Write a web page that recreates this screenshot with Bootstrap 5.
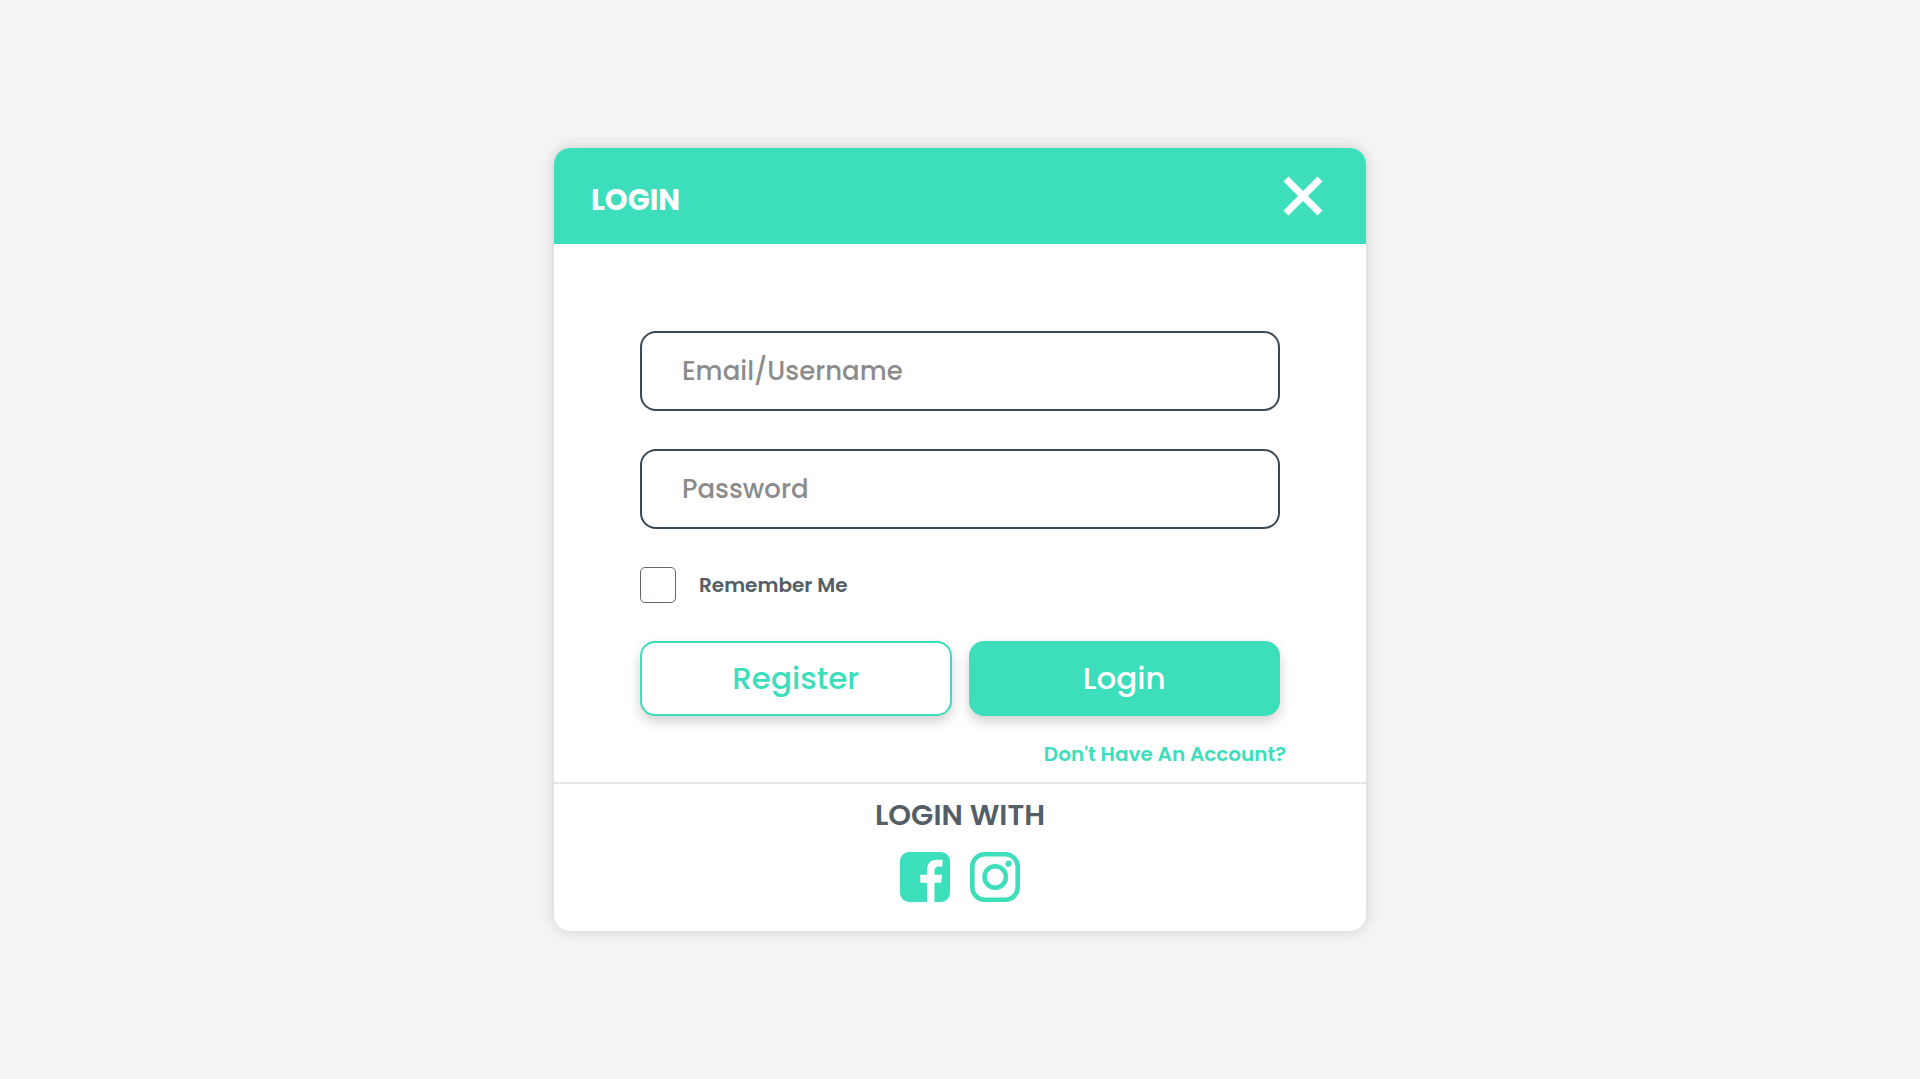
<!DOCTYPE html>
<html lang="en">
<head>
<meta charset="utf-8">
<meta name="viewport" content="width=device-width, initial-scale=1">
<title>Login</title>
<link href="https://cdn.jsdelivr.net/npm/bootstrap@5.3.0/dist/css/bootstrap.min.css" rel="stylesheet">
<style>
:root { --mint: #3cdebb; --slate: #535e67; }
body { background: #f4f4f4; font-family: Poppins, Inter, "Open Sans", sans-serif; color: var(--slate); }
.login-card { max-width: 812px; border-radius: 16px; box-shadow: 0 0 14px rgba(0,0,0,.16); overflow: hidden; }
.login-head { background: var(--mint); padding: 26px 41px 26px 37px; }
.login-title { font-size: 29px; line-height: 36px; font-weight: 700; }
.close-btn { width: 44px; height: 44px; line-height: 0; }
.login-form { padding: 87px 86px 13px; }
.form-stack { gap: 38px; }
.field { height: 80px; padding: 0 40px; border: 2px solid #394956; border-radius: 16px; font-size: 26px; font-weight: 500; color: var(--slate); }
.field::placeholder { color: #8c8c8c; }
.remember { gap: 23px; font-size: 20px; line-height: 36px; font-weight: 600; }
.remember .form-check-input { width: 36px; height: 36px; border: 1px solid #63686c; border-radius: 5px; }
.remember .form-check-input:checked { background-color: var(--mint); border-color: var(--mint); }
.actions { gap: 17px; }
.action-btn { height: 75px; padding: 0; border: 2px solid var(--mint); border-radius: 15px; font-size: 31px; font-weight: 500; box-shadow: 0 6px 12px rgba(0,0,0,.18); }
.outline-mint, .outline-mint:hover { color: var(--mint); background: #fff; border-color: var(--mint); }
.solid-mint, .solid-mint:hover { color: #fff; background: var(--mint); border-color: var(--mint); }
.account-link { margin: 23px -6px 0 0; font-size: 20px; line-height: 30px; font-weight: 600; color: var(--mint); }
.social { border-top: 2px solid #e6e6e6; padding: 10px 24px 29px; }
.social-title { font-size: 29px; line-height: 42px; font-weight: 600; }
.social-links { gap: 20px; margin-top: 16px; }
.social-links a { color: var(--mint); line-height: 0; }
</style>
</head>
<body>
<main class="min-vh-100 d-flex align-items-center justify-content-center">
  <section class="login-card bg-white w-100" aria-labelledby="login-title">
    <header class="login-head d-flex align-items-end justify-content-between">
      <h1 class="login-title text-white m-0" id="login-title">LOGIN</h1>
      <button type="button" class="close-btn btn p-0 border-0" aria-label="Close">
        <svg width="40" height="40" viewBox="0 0 40 40" stroke="#fff" stroke-width="7"><path d="M3 3L37 37M37 3L3 37"/></svg>
      </button>
    </header>
    <form class="login-form">
      <div class="form-stack d-flex flex-column">
        <input class="field form-control" type="text" placeholder="Email/Username" aria-label="Email/Username">
        <input class="field form-control" type="password" placeholder="Password" aria-label="Password">
        <div class="remember d-flex align-items-center">
          <input class="form-check-input m-0" type="checkbox" id="remember">
          <label for="remember">Remember Me</label>
        </div>
        <div class="actions d-flex">
          <button type="button" class="action-btn outline-mint btn flex-fill w-50">Register</button>
          <button type="submit" class="action-btn solid-mint btn flex-fill w-50">Login</button>
        </div>
      </div>
      <div class="d-flex justify-content-end">
        <a class="account-link text-decoration-none" href="#">Don't Have An Account?</a>
      </div>
    </form>
    <footer class="social text-center">
      <h2 class="social-title m-0">LOGIN WITH</h2>
      <div class="social-links d-flex justify-content-center">
        <a href="#" aria-label="Facebook">
          <svg width="50" height="50" viewBox="0 0 50 50" fill="currentColor"><path d="M9 0H41A9 9 0 0 1 50 9V41A9 9 0 0 1 41 50H34.500V30.700H41.200L42 22.800H34.500V19C34.500 16 36 14.500 38.500 14.500H42.500V7.800H37C30.500 7.800 27 12 27 17.500V22.800H20.300V30.700H27V50H9A9 9 0 0 1 0 41V9A9 9 0 0 1 9 0Z"/></svg>
        </a>
        <a href="#" aria-label="Instagram">
          <svg width="50" height="50" viewBox="0 0 50 50" fill="none" stroke="currentColor"><rect x="2.300" y="2.300" width="45.400" height="45.400" rx="12.500" stroke-width="4.600"/><circle cx="25.200" cy="25" r="10.700" stroke-width="4.500"/><circle cx="38.500" cy="11.700" r="3.100" fill="currentColor" stroke="none"/></svg>
        </a>
      </div>
    </footer>
  </section>
</main>
<script src="https://cdn.jsdelivr.net/npm/bootstrap@5.3.0/dist/js/bootstrap.bundle.min.js"></script>
</body>
</html>
